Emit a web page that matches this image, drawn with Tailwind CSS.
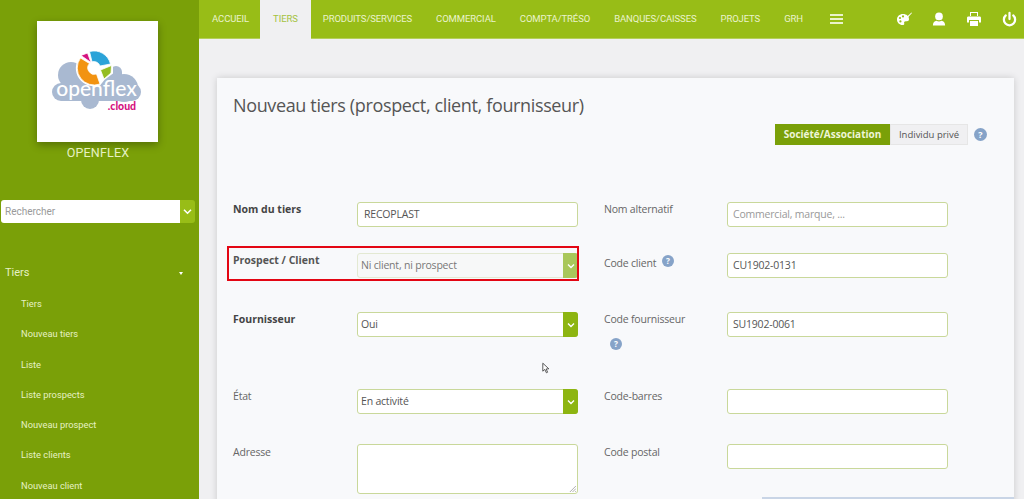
<!DOCTYPE html>
<html lang="fr">
<head>
    <meta charset="UTF-8">
    <meta name="viewport" content="width=device-width, initial-scale=1.0">
    <title>Nouveau tiers</title>
    <script src="https://cdn.jsdelivr.net/npm/@tailwindcss/browser@4"></script>
</head>
<body class="relative flex h-[499px] w-[1024px] overflow-hidden bg-[#f0f0f2] font-['Open_Sans',sans-serif]">

    <!-- sidebar -->
    <aside class="w-[199px] h-full shrink-0 bg-[#7aa008] font-['Roboto',sans-serif] text-[#e6f1c4]">
        <div class="pt-[21px] pl-[37px]">
            <div class="w-[121px] h-[121px] bg-white shadow-[0_3px_8px_rgba(0,0,0,0.3)]">
                <svg viewBox="37 21 121 121" class="w-[121px] h-[121px]">
                    <g fill="#a9b9d1">
                        <circle cx="71" cy="75" r="13"/>
                        <circle cx="116" cy="72" r="6"/>
                        <circle cx="124" cy="88" r="14"/>
                        <circle cx="90" cy="100" r="9"/>
                        <rect x="62" y="72" width="60" height="20"/>
                        <rect x="52" y="83" width="89" height="18" rx="9"/>
                    </g>
                    <path fill="#fff" stroke="#fff" stroke-width="2" d="M81 57 A17 17 0 0 0 100 84 L104 79 L112 73 L112 65 L100 66 Z"/>
                    <path fill="#2ba3d8" stroke="#fff" stroke-width="0.8" d="M89.5 51.5 A17 17 0 0 1 110.5 64 L100 66 A6.5 6.5 0 0 0 92 61.8 Z"/>
                    <path fill="#d5127f" stroke="#fff" stroke-width="0.8" d="M81 55.5 L87.5 53 L91 62.5 Z"/>
                    <path fill="#f29312" stroke="#fff" stroke-width="0.8" d="M80.5 58 A17 17 0 0 0 100 84 L96.5 74 A6.5 6.5 0 0 1 89.5 63.5 Z"/>
                    <path fill="#94bd22" stroke="#fff" stroke-width="0.8" d="M100.5 70 L111.5 65.5 L111 73 L104 79 Z"/>
                    <text x="96.5" y="96" text-anchor="middle" font-family="Lato, sans-serif" font-size="21" font-weight="500" fill="#fff">openflex</text>
                    <text x="122" y="110" text-anchor="middle" font-family="Lato, sans-serif" font-size="10.5" font-weight="900" fill="#d5127f">.cloud</text>
                </svg>
            </div>
        </div>
        <p class="mt-[3px] pr-[3px] text-center text-[12.5px] leading-[15px] tracking-[0.2px]">OPENFLEX</p>

        <div class="mt-[40px] ml-[1px] flex h-[23px] w-[194px]">
            <div class="flex-1 bg-white rounded-l-[3px] pl-[4px] text-[10px] leading-[23px] text-[#9a9a9a]">Rechercher</div>
            <div class="flex w-[15px] items-center justify-center bg-[#98bd17] rounded-r-[3px]">
                <svg viewBox="0 0 10 8" class="w-[9px] h-[7px]"><path d="M1 2 L5 6 L9 2" fill="none" stroke="#fff" stroke-width="1.8"/></svg>
            </div>
        </div>

        <div class="mt-[42px] pl-[5px] pr-[16px] flex items-center justify-between text-[11px] leading-[16px]">
            <span>Tiers</span>
            <span class="w-0 h-0 border-x-[2.5px] border-t-[3px] border-x-transparent border-t-white"></span>
        </div>
        <ul class="mt-[8px] pl-[21px] text-[9.3px] leading-[30.3px]">
            <li>Tiers</li>
            <li>Nouveau tiers</li>
            <li>Liste</li>
            <li>Liste prospects</li>
            <li>Nouveau prospect</li>
            <li>Liste clients</li>
            <li>Nouveau client</li>
        </ul>
    </aside>

    <main class="flex-1 min-w-0">
        <!-- top nav -->
        <nav class="flex h-[39px] bg-[#98bd17] border-b border-[#b4cf5a] font-['Roboto',sans-serif] text-[9.5px] tracking-[-0.1px] text-[#eaf3cc] leading-[38px]">
            <a class="pl-[13px] pr-[11px]">ACCUEIL</a>
            <a class="px-[13px] h-[39px] bg-[#f0f0f2] text-[#a5c23f]">TIERS</a>
            <a class="px-[12px]">PRODUITS/SERVICES</a>
            <a class="px-[12px]">COMMERCIAL</a>
            <a class="px-[12px]">COMPTA/TRÉSO</a>
            <a class="px-[12px]">BANQUES/CAISSES</a>
            <a class="px-[12px]">PROJETS</a>
            <a class="px-[12px]">GRH</a>
            <div class="ml-[15px] flex w-[13px] flex-col justify-center gap-[2px]">
                <span class="h-[2px] bg-[#eaf3cc]"></span>
                <span class="h-[2px] bg-[#eaf3cc]"></span>
                <span class="h-[2px] bg-[#eaf3cc]"></span>
            </div>
            <div class="ml-auto flex items-center gap-[20px] pr-[7px] text-white">
                <!-- palette -->
                <svg viewBox="0 0 16 16" class="w-[16px] h-[16px]" fill="#fff">
                    <path d="M7 3 C3.5 3 1 5.4 1 8.5 C1 11.6 3.5 14 6.5 14 C8 14 8.6 13.2 8.2 12.2 C7.8 11 8.5 10.2 9.8 10.2 L11 10.2 C12.3 10.2 13 9.4 13 8.2 C13 5.2 10.5 3 7 3 Z"/>
                    <circle cx="4" cy="7" r="1.1" fill="#98bd17"/><circle cx="7" cy="5.4" r="1.1" fill="#98bd17"/><circle cx="4.4" cy="10.4" r="1.1" fill="#98bd17"/>
                    <path d="M10 6.5 L15.5 1.5 L16 2 L11 7.5 Z"/>
                </svg>
                <!-- user -->
                <svg viewBox="0 0 16 16" class="w-[14px] h-[16px]" fill="#fff">
                    <circle cx="8" cy="5" r="4.4"/>
                    <path d="M1 15.5 C1 12 3 10.3 5 10 C7 11 9 11 11 10 C13 10.3 15 12 15 15.5 Z"/>
                </svg>
                <!-- print -->
                <svg viewBox="0 0 16 16" class="w-[16px] h-[16px]" fill="#fff">
                    <path d="M4 1 H12 V5 H4 Z M5 2 V5 H11 V2 Z" fill-rule="evenodd"/>
                    <path d="M2.5 5.5 H13.5 C14.5 5.5 15 6 15 7 V11.5 H13 V9 H3 V11.5 H1 V7 C1 6 1.5 5.5 2.5 5.5 Z"/>
                    <path d="M4 10 H12 V15 H4 Z"/>
                </svg>
                <!-- power -->
                <svg viewBox="0 0 16 16" class="w-[15px] h-[16px]" fill="none" stroke="#fff" stroke-width="2.4" stroke-linecap="round">
                    <path d="M8 1.5 V8"/>
                    <path d="M4 4.2 A6 6 0 1 0 12 4.2"/>
                </svg>
            </div>
        </nav>

        <!-- content -->
        <div class="pt-[39px] pl-[18px] pr-[10px]">
            <section class="h-[430px] bg-[#f8f9fb] pl-[16px] pt-[14px] shadow-[0_0_7px_rgba(0,0,0,0.16)] text-[10.5px] leading-[15px] tracking-[-0.2px] text-[#666]">
                <h1 class="text-[18px] leading-[26px] text-[#555] tracking-[-0.36px]">Nouveau tiers (prospect, client, fournisseur)</h1>
                <div class="mt-[6px] flex h-[21px] items-center pl-[542px] tracking-normal">
                    <span class="flex h-[21px] w-[115px] items-center justify-center bg-[#7aa008] text-[10px] font-bold text-[#eef5d6]">Société/Association</span>
                    <span class="flex h-[21px] w-[78px] items-center justify-center border border-[#e6e6e6] bg-[#f0f0f2] text-[9.5px] text-[#555]">Individu privé</span>
                    <svg viewBox="0 0 16 16" class="ml-[6px] w-[13px] h-[13px]"><circle cx="8" cy="8" r="8" fill="#86a3c8"/><text x="8" y="12" text-anchor="middle" font-size="11" font-weight="700" fill="#fff">?</text></svg>
                </div>

                <div class="mt-[57px] grid h-[25px] grid-cols-[124px_221px_26px_123px_221px] mb-[26px]">
                    <label class="font-bold text-[#444] tracking-normal">Nom du tiers</label>
                    <div class="h-[25px] rounded-[3px] border border-[#c9d89a] bg-white px-[6px] leading-[22px] text-[#555]">RECOPLAST</div>
                    <span></span>
                    <label>Nom alternatif</label>
                    <div class="h-[25px] rounded-[3px] border border-[#c9d89a] bg-white px-[5px] leading-[22px] text-[#999]">Commercial, marque, ...</div>
                </div>

                <div class="grid h-[25px] grid-cols-[124px_221px_26px_123px_221px] mb-[34px]">
                    <label class="font-bold text-[#555] tracking-normal">Prospect / Client</label>
                    <div class="flex h-[25px] rounded-[3px] border border-[#e3e9d2] bg-[#f7f8f8] pl-[3px] leading-[22px] text-[#777]">
                        <span class="flex-1">Ni client, ni prospect</span>
                        <span class="-my-px -mr-px flex w-[15px] items-center justify-center rounded-r-[3px] bg-[#a9c75a]">
                            <svg viewBox="0 0 10 8" class="w-[8px] h-[6px]"><path d="M1 2 L5 6 L9 2" fill="none" stroke="#fff" stroke-width="1.8"/></svg>
                        </span>
                    </div>
                    <span></span>
                    <label class="flex items-start gap-[6px] pt-[3px]">Code client
                        <svg viewBox="0 0 16 16" class="-mt-[1px] w-[12px] h-[12px]"><circle cx="8" cy="8" r="8" fill="#86a3c8"/><text x="8" y="12" text-anchor="middle" font-size="11" font-weight="700" fill="#fff">?</text></svg>
                    </label>
                    <div class="h-[25px] rounded-[3px] border border-[#c9d89a] bg-white px-[5px] leading-[22px] text-[#555]">CU1902-0131</div>
                </div>

                <div class="grid h-[25px] grid-cols-[124px_221px_26px_123px_221px] mb-[52px]">
                    <label class="font-bold text-[#444] tracking-normal">Fournisseur</label>
                    <div class="flex h-[25px] rounded-[3px] border border-[#c9d89a] bg-white pl-[3px] leading-[22px] text-[#555]">
                        <span class="flex-1">Oui</span>
                        <span class="-my-px -mr-px flex w-[15px] items-center justify-center rounded-r-[3px] bg-[#8db511]">
                            <svg viewBox="0 0 10 8" class="w-[8px] h-[6px]"><path d="M1 2 L5 6 L9 2" fill="none" stroke="#fff" stroke-width="1.8"/></svg>
                        </span>
                    </div>
                    <span></span>
                    <label>Code fournisseur
                        <svg viewBox="0 0 16 16" class="mt-[11px] ml-[6px] w-[12px] h-[12px]"><circle cx="8" cy="8" r="8" fill="#86a3c8"/><text x="8" y="12" text-anchor="middle" font-size="11" font-weight="700" fill="#fff">?</text></svg>
                    </label>
                    <div class="h-[25px] rounded-[3px] border border-[#c9d89a] bg-white px-[5px] leading-[22px] text-[#555]">SU1902-0061</div>
                </div>

                <div class="grid h-[25px] grid-cols-[124px_221px_26px_123px_221px] mb-[30px]">
                    <label>État</label>
                    <div class="flex h-[25px] rounded-[3px] border border-[#c9d89a] bg-white pl-[3px] leading-[22px] text-[#555]">
                        <span class="flex-1">En activité</span>
                        <span class="-my-px -mr-px flex w-[15px] items-center justify-center rounded-r-[3px] bg-[#8db511]">
                            <svg viewBox="0 0 10 8" class="w-[8px] h-[6px]"><path d="M1 2 L5 6 L9 2" fill="none" stroke="#fff" stroke-width="1.8"/></svg>
                        </span>
                    </div>
                    <span></span>
                    <label>Code-barres</label>
                    <div class="h-[25px] rounded-[3px] border border-[#c9d89a] bg-white"></div>
                </div>

                <div class="grid grid-cols-[124px_221px_26px_123px_221px]">
                    <label class="pt-[1px]">Adresse</label>
                    <div class="relative h-[50px] rounded-[3px] border border-[#c9d89a] bg-white">
                        <svg viewBox="0 0 8 8" class="absolute bottom-[1px] right-[1px] w-[7px] h-[7px]"><path d="M1 8 L8 1 M4 8 L8 4 M7 8 L8 7" stroke="#999" stroke-width="0.9"/></svg>
                    </div>
                    <span></span>
                    <label class="pt-[1px]">Code postal</label>
                    <div class="h-[25px] rounded-[3px] border border-[#c9d89a] bg-white"></div>
                </div>
            </section>
        </div>
    </main>

    <!-- red highlight drawn over the screenshot -->
    <div class="absolute left-[227px] top-[246px] h-[35px] w-[352px] border-2 border-[#e30613]"></div>

    <!-- mouse cursor -->
    <svg viewBox="0 0 10 14" class="absolute left-[542px] top-[362px] w-[8px] h-[12px]"><path d="M1 1 L1 11 L3.5 8.8 L5.5 13 L7 12.3 L5.2 8.2 L8.5 8 Z" fill="#fff" stroke="#333" stroke-width="1"/></svg>

    <!-- edge of the next block, cut off by the window -->
    <div class="absolute left-[762px] bottom-0 h-[2px] w-[252px] bg-[#c9d5e6]"></div>
</body>
</html>
